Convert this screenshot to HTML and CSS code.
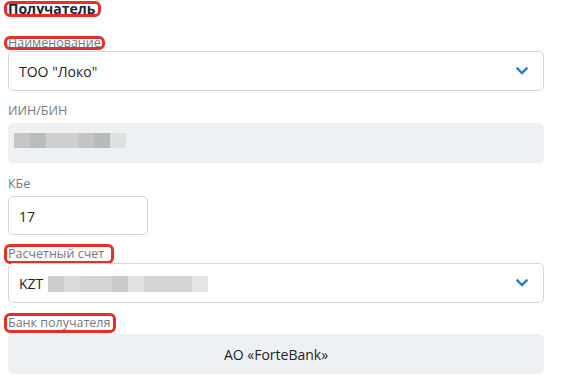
FILE: index.html
```html
<!DOCTYPE html>
<html lang="ru">
<head>
<meta charset="utf-8">
<link rel="stylesheet" href="styles.css">
</head>
<body>
<div class="form">
  <div class="title-row"><span class="title mark mark-title">Получатель</span></div>

  <div class="label-row row-1"><span class="label mark mark-tight mark-name">Наименование</span></div>
  <div class="select">
    <span class="value">ТОО "Локо"</span>
    <svg class="chevron" width="12" height="8" viewBox="0 0 12 8"><path d="M1.5 1.5 L6 6 L10.5 1.5" fill="none" stroke="#2b7bd4" stroke-width="2.4" stroke-linecap="square"/></svg>
  </div>

  <div class="label-row row-2"><span class="label">ИИН/БИН</span></div>
  <div class="readonly iin">
    <span class="blur">
      <i class="b w16 s1"></i><i class="b w16 s2"></i><i class="b w32 s3"></i><i class="b w16 s4"></i><i class="b w16 s5"></i><i class="b w16 s6"></i>
    </span>
  </div>

  <div class="label-row row-3"><span class="label">КБе</span></div>
  <div class="input"><span class="value">17</span></div>

  <div class="label-row row-4"><span class="label mark mark-mid mark-acc">Расчетный счет</span></div>
  <div class="select">
    <span class="value">KZT</span>
    <span class="blur blur-acc">
      <i class="b w16 k1"></i><i class="b w16 k2"></i><i class="b w32 k3"></i><i class="b w16 k4"></i><i class="b w16 k5"></i><i class="b w48 k6"></i><i class="b w16 k7"></i>
    </span>
    <svg class="chevron" width="12" height="8" viewBox="0 0 12 8"><path d="M1.5 1.5 L6 6 L10.5 1.5" fill="none" stroke="#2b7bd4" stroke-width="2.4" stroke-linecap="square"/></svg>
  </div>

  <div class="label-row row-5"><span class="label mark mark-mid mark-bank">Банк получателя</span></div>
  <div class="readonly bank"><span class="value">АО «ForteBank»</span></div>
</div>
</body>
</html>
```
FILE: styles.css
```css
* { box-sizing: border-box; }
html, body { margin: 0; padding: 0; background: #ffffff; }
body { font-family: "Open Sans", "Noto Sans", sans-serif; }

.form {
  display: flex;
  flex-direction: column;
  width: 552px;
  padding: 0 8px;
}

.title-row {
  height: 18px;
  display: flex;
  align-items: flex-start;
}
.title {
  margin-top: 4px;
  font-size: 14px;
  font-weight: 700;
  line-height: 10px;
  color: #1d2432;
}

.mark {
  outline: 3px solid #e3302b;
  border-radius: 3px;
  margin-left: -1px;
  padding-left: 1px;
}
.mark-title { padding-right: 3px; }
.mark-name { padding-right: 1px; }
.mark-acc { padding-right: 7px; }
.mark-bank { padding-right: 3px; }

.label-row {
  display: flex;
  align-items: flex-end;
}
.label {
  font-size: 12.5px;
  line-height: 16px;
  color: #737880;
  white-space: nowrap;
}
.mark-tight { line-height: 8px; }
.mark-mid { line-height: 14px; }

.row-1 { height: 33px; padding-bottom: 4px; }
.row-2 { height: 32px; padding-bottom: 4px; }
.row-3 { height: 33px; padding-bottom: 4px; }
.row-4 { height: 28px; padding-bottom: 2px; }
.row-5 { height: 31px; padding-bottom: 4px; }

.select, .input, .readonly {
  display: flex;
  align-items: center;
  border-radius: 5px;
}
.select, .input {
  border: 1px solid #d3d6da;
  background: #ffffff;
  padding: 1px 15px 0 10px;
}
.select { height: 40px; width: 536px; }
.input { height: 39px; width: 140px; }

.value {
  font-size: 14px;
  color: #1e1f24;
  white-space: nowrap;
}

.chevron { margin-left: auto; margin-top: -1px; }

.readonly {
  background: #eef1f4;
  height: 40px;
  width: 536px;
}
.iin { padding-left: 6px; padding-bottom: 5px; }
.bank { justify-content: center; padding-top: 1px; }

.blur { display: flex; height: 15px; }
.blur-acc { height: 16px; margin-left: 5px; margin-top: 1px; }
.b { display: block; height: 100%; }
.w16 { width: 16px; }
.w32 { width: 32px; }
.w48 { width: 48px; }

.s1 { background: #c6c6c6; }
.s2 { background: #babbbb; }
.s3 { background: #cfcfcf; }
.s4 { background: #c4c4c4; }
.s5 { background: #b9baba; }
.s6 { background: #dfe0e0; }

.k1 { background: #cdcdcd; }
.k2 { background: #dcdcdc; }
.k3 { background: #d5d5d5; }
.k4 { background: #cacaca; }
.k5 { background: #e1e1e1; }
.k6 { background: #d4d4d4; }
.k7 { background: #e5e5e5; }
```
